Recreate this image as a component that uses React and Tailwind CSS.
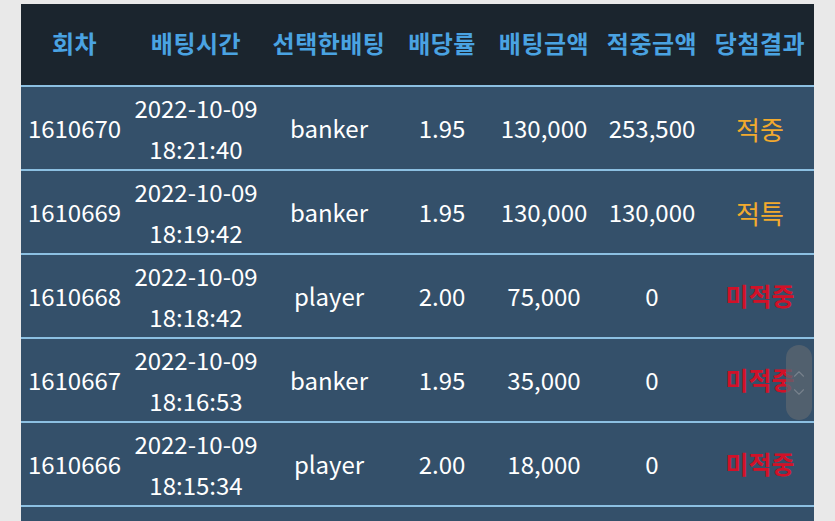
import { ChevronUp, ChevronDown } from 'lucide-react';

const rows = [
    { id: '1610670', date: '2022-10-09', time: '18:21:40', pick: 'banker', odds: '1.95', bet: '130,000', win: '253,500', result: '적중', tone: 'gold' },
    { id: '1610669', date: '2022-10-09', time: '18:19:42', pick: 'banker', odds: '1.95', bet: '130,000', win: '130,000', result: '적특', tone: 'gold' },
    { id: '1610668', date: '2022-10-09', time: '18:18:42', pick: 'player', odds: '2.00', bet: '75,000', win: '0', result: '미적중', tone: 'red' },
    { id: '1610667', date: '2022-10-09', time: '18:16:53', pick: 'banker', odds: '1.95', bet: '35,000', win: '0', result: '미적중', tone: 'red' },
    { id: '1610666', date: '2022-10-09', time: '18:15:34', pick: 'player', odds: '2.00', bet: '18,000', win: '0', result: '미적중', tone: 'red' },
    { id: '1610665', date: '2022-10-07', time: '18:14:02', pick: 'banker', odds: '1.95', bet: '20,000', win: '0', result: '미적중', tone: 'red' },
];

const heads = ['회차', '배팅시간', '선택한배팅', '배당률', '배팅금액', '적중금액', '당첨결과'];
const cols = 'grid grid-cols-[107px_136px_130px_96px_108px_108px_108px]';

export default function App() {
    return (
        <div className="h-[521px] overflow-hidden bg-[#e9e9e9] pt-[4px] pl-[21px] font-['Noto_Sans_CJK_KR','Noto_Sans',sans-serif]">
            <div className="relative w-[793px]">
                {/* header */}
                <div className={`${cols} h-[81px] items-center bg-[#1b252e] pb-[3px] text-[24px] font-bold text-[#4aa3e2]`}>
                    {heads.map((h) => (
                        <div key={h} className="text-center whitespace-nowrap tracking-[0.5px]">{h}</div>
                    ))}
                </div>

                {rows.map((r) => (
                    <div key={r.id} className={`${cols} h-[84px] items-center border-t-2 border-[#8cc0e2] bg-[#34506a] pb-[2px] text-[24px] text-white`}>
                        <div className="text-center">{r.id}</div>
                        <div className="text-center leading-[41px]">
                            <div>{r.date}</div>
                            <div>{r.time}</div>
                        </div>
                        <div className="text-center">{r.pick}</div>
                        <div className="text-center">{r.odds}</div>
                        <div className="text-center">{r.bet}</div>
                        <div className="text-center">{r.win}</div>
                        <div className={r.tone === 'gold' ? 'text-center text-[26px] text-[#f2aa2e]' : 'text-center text-[25px] font-bold text-[#d11128]'}>{r.result}</div>
                    </div>
                ))}

                {/* scroll handle overlay */}
                <div className="absolute left-[765px] top-[341px] flex h-[75px] w-[26px] flex-col items-center justify-center rounded-full bg-[#5b6570]/75">
                    <ChevronUp className="h-[18px] w-[18px] text-[#77818c]" strokeWidth={1.5} />
                    <ChevronDown className="h-[18px] w-[18px] text-[#77818c]" strokeWidth={1.5} />
                </div>
            </div>
        </div>
    );
}
